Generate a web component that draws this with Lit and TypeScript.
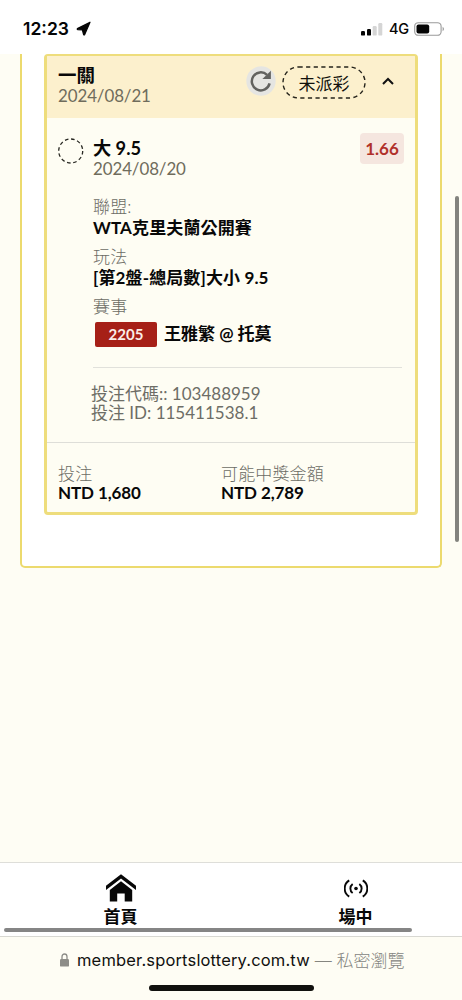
import { LitElement, html, css, svg } from 'lit';
import { customElement, property } from 'lit/decorators.js';

@customElement('status-bar')
class StatusBar extends LitElement {
  static styles = css`
    :host { display: flex; box-sizing: border-box; height: 54px; background: #fff; padding: 3px 17px 0 23px; align-items: center; font-family: Inter, sans-serif; color: #050505; }
    .time { font-size: 17.5px; font-weight: 600; letter-spacing: 0; width: 49px; white-space: nowrap; }
    .arrow { margin-left: 4px; width: 15px; height: 15px; display: block; }
    .right { margin-left: auto; display: flex; align-items: center; }
    .net { font-size: 14.5px; font-weight: 500; margin: 0 5px 0 6px; width: 20px; white-space: nowrap; letter-spacing: -0.2px; }
    svg { display: block; }
  `;
  render() {
    return html`
      <span class="time">12:23</span>
      <svg class="arrow" viewBox="0 0 15 15"><path d="M14 1.2 L1.4 7.6 Q.9 8.4 1.8 8.6 L6.4 9 L7.6 13.6 Q8.2 14.4 8.7 13.6 Z" fill="#050505" stroke="#050505" stroke-width="1.2" stroke-linejoin="round"/></svg>
      <div class="right">
        <svg width="22" height="14" viewBox="0 0 22 14">
          <rect x="0" y="9" width="4" height="4.6" rx="1.2" fill="#050505"/>
          <rect x="6" y="7" width="4" height="6.6" rx="1.2" fill="#050505"/>
          <rect x="11.7" y="4" width="4" height="9.6" rx="1.2" fill="#d5d5d5"/>
          <rect x="17.3" y="1" width="4" height="12.6" rx="1.2" fill="#d5d5d5"/>
        </svg>
        <span class="net">4G</span>
        <svg width="31" height="14" viewBox="0 0 31 14">
          <rect x=".7" y=".7" width="26.4" height="12.6" rx="3.6" fill="none" stroke="#9a9a9a" stroke-width="1.1"/>
          <rect x="2.5" y="2.5" width="12.7" height="9" rx="2" fill="#050505"/>
          <path d="M28.6 4.8 Q30 5.6 30 7 T28.6 9.2Z" fill="#9a9a9a"/>
        </svg>
      </div>`;
  }
}

@customElement('bet-field')
class BetField extends LitElement {
  @property() label = '';
  @property() value = '';
  static styles = css`
    :host { display: block; white-space: nowrap; }
    .label { height: var(--label-height, 20px); line-height: 18px; color: #6c6c65; font-weight: 300; letter-spacing: 0.15px; }
    .value { height: 20px; line-height: 20px; color: #080808; font-weight: 700; letter-spacing: var(--value-spacing, 0); }
  `;
  render() {
    return html`<div class="label">${this.label}</div>
      <div class="value"><slot>${this.value}</slot></div>`;
  }
}

@customElement('bet-card')
class BetCard extends LitElement {
  static styles = css`
    :host { display: flex; flex-direction: column; box-sizing: border-box; height: 461px; border: 3px solid #eedd7c; border-top-width: 2px; border-radius: 4px; background: #fefdf3; white-space: nowrap; overflow: hidden; }
    .head { box-sizing: border-box; height: 62px; flex: none; display: flex; background: #fcf0cd; padding: 9px 20px 0 11px; }
    .title { font-weight: 700; color: #080808; line-height: 21px; height: 21px; font-size: 18.5px; }
    .date { color: #6f6c5c; line-height: 20px; height: 21px; font-weight: 400; font-size: 16.9px; letter-spacing: -0.08px; }
    .tools { margin-left: auto; display: flex; height: 34px; align-items: center; }
    .refresh { display: block; margin: -3px 6px 0 0; }
    .state { position: relative; display: flex; align-items: center; justify-content: center; width: 84px; height: 33px; color: #11100c; font-weight: 400; }
    .outline { position: absolute; inset: 0; }
    .chev { margin: -2px 0 0 15px; display: block; }
    .pick { display: flex; padding: 20px 11px 0 11px; height: 42px; flex: none; }
    .ring { display: block; margin: 0 9px 0 0; }
    .pickname { font-weight: 700; font-size: 18.2px; line-height: 21px; height: 21px; color: #080808; }
    .odds { margin-left: auto; width: 44px; height: 31px; border-radius: 4px; background: #f5e6df; color: #b0302a; font-weight: 700; font-size: 17px; display: flex; align-items: center; justify-content: center; margin-top: -5px; }
    .fields { --value-spacing: 0.12px; margin: 18px 13px 0 46px; flex: none; height: 169px; border-bottom: 1px solid #e1e1db; display: flex; flex-direction: column; gap: 10px; }
    .match { display: flex; align-items: center; margin: 3px 0 0 2px; height: 26px; letter-spacing: 0; }
    .code { width: 62px; height: 25px; border-radius: 2px; background: #a62017; color: #fbeee8; font-size: 15px; display: flex; align-items: center; justify-content: center; margin-right: 7px; }
    .ids { padding: 16px 0 0 44px; height: 58px; flex: none; color: #6d6d66; line-height: 19px; border-bottom: 1px solid #deded8; }
    .money { --label-height: 18px; --value-spacing: -0.1px; display: grid; grid-template-columns: 163px 1fr; padding: 22px 0 0 11px; }
  `;
  render() {
    return html`
      <div class="head">
        <div><div class="title">一關</div><div class="date">2024/08/21</div></div>
        <div class="tools">
          <svg class="refresh" width="30" height="30" viewBox="0 0 30 30">
            <circle cx="15" cy="15" r="14.7" fill="#e5e5e2"/>
            <path d="M23.6 17.4 A9 9 0 1 1 21 8.8" fill="none" stroke="#62625f" stroke-width="2.5"/>
            <path d="M24.9 4.8 V13 H16.4 Z" fill="#62625f"/>
          </svg>
          <div class="state">
            <svg class="outline" width="84" height="33"><rect x="1" y="1" width="82" height="31" rx="15.5" fill="none" stroke="#25231b" stroke-width="1.4" stroke-dasharray="4.2 3.4"/></svg>
            未派彩
          </div>
          <svg class="chev" width="14" height="10" viewBox="0 0 14 10"><path d="M2 8 L7 3 L12 8" fill="none" stroke="#111" stroke-width="2"/></svg>
        </div>
      </div>
      <div class="pick">
        <svg class="ring" width="26" height="26" viewBox="0 0 26 26"><circle cx="12.7" cy="13" r="12" fill="none" stroke="#292923" stroke-width="1.3" stroke-dasharray="3.6 2.683"/></svg>
        <div><div class="pickname">大 9.5</div><div class="date">2024/08/20</div></div>
        <div class="odds">1.66</div>
      </div>
      <div class="fields">
        <bet-field label="聯盟:" value="WTA克里夫蘭公開賽"></bet-field>
        <bet-field label="玩法" value="[第2盤-總局數]大小 9.5"></bet-field>
        <bet-field label="賽事"><div class="match"><span class="code">2205</span>王雅繁 @ 托莫</div></bet-field>
      </div>
      <div class="ids"><div>投注代碼:: 103488959</div><div>投注 ID: 115411538.1</div></div>
      <div class="money">
        <bet-field label="投注" value="NTD 1,680"></bet-field>
        <bet-field label="可能中獎金額" value="NTD 2,789"></bet-field>
      </div>`;
  }
}

@customElement('tab-bar')
class TabBar extends LitElement {
  static styles = css`
    :host { position: relative; display: grid; grid-template-columns: 241px 1fr; box-sizing: border-box; height: 75px; background: #fff; border-top: 1px solid #deded9; border-bottom: 1px solid #d8d8d2; }
    .tab { display: flex; flex-direction: column; align-items: center; color: #080808; font-weight: 600; line-height: 20px; }
    .live { margin-left: 8px; }
    .icon { display: flex; align-items: center; justify-content: center; height: 28px; margin: 11px 0 5px; }
    .scroll { position: absolute; left: 4px; bottom: 4px; width: 408px; height: 4px; border-radius: 2px; background: #858585; }
  `;
  render() {
    const waves = svg`<path d="M4.5 1 A10.6 10.6 0 0 0 4.5 19 M8.3 4.9 A6.4 6.4 0 0 0 8.3 15.1 M15.7 4.9 A6.4 6.4 0 0 1 15.7 15.1 M19.5 1 A10.6 10.6 0 0 1 19.5 19" fill="none" stroke="#080808" stroke-width="2.1"/><circle cx="12" cy="10" r="2" fill="#080808"/>`;
    return html`
      <div class="tab"><div class="icon"><svg width="30" height="28" viewBox="0 0 30 28">
        <path d="M15 .2 L30 11.8 V16 L15 4.4 L0 16 V11.8 Z" fill="#080808"/>
        <path d="M15 7.2 L26.2 16 V27.6 H18.7 V19.4 H11.2 V27.6 H3.8 V16 Z" fill="#080808"/></svg></div>首頁</div>
      <div class="tab live"><div class="icon"><svg width="24" height="19" viewBox="-0.5 -0.5 25 21">${waves}</svg></div>場中</div>
      <div class="scroll"></div>`;
  }
}

@customElement('address-bar')
class AddressBar extends LitElement {
  static styles = css`
    :host { display: flex; flex-direction: column; align-items: center; box-sizing: border-box; height: 63px; background: #fefdf4; }
    .url { display: flex; align-items: center; align-self: stretch; height: 24px; margin: 11px 0 0 60px; font-family: Inter, "Noto Sans CJK TC", sans-serif; font-size: 16.5px; letter-spacing: 0.16px; color: #11110f; white-space: nowrap; }
    .lock { display: block; margin-right: 8px; }
    .mode { color: #85857f; font-weight: 300; font-size: 17px; letter-spacing: 0; margin: -2px 0 0 5px; }
    .home { width: 165px; height: 6px; border-radius: 3px; background: #11110e; margin-top: 13px; }
  `;
  render() {
    return html`<div class="url">
        <svg class="lock" width="9" height="14" viewBox="0 0 9 14"><rect x="0" y="6" width="9" height="7.6" rx="1.2" fill="#8d8d88"/><path d="M2 6.5 V3.7 A2.5 2.7 0 0 1 7 3.7 V6.5" fill="none" stroke="#8d8d88" stroke-width="1.3"/></svg>
        <span>member.sportslottery.com.tw</span><span class="mode">— 私密瀏覽</span>
      </div><div class="home"></div>`;
  }
}

@customElement('app-root')
class AppRoot extends LitElement {
  static styles = css`
    :host { display: flex; flex-direction: column; width: 462px; height: 1000px; overflow: hidden; background: #fefdf4; font-family: Lato, "Noto Sans CJK TC", sans-serif; font-size: 17px; }
    .page { position: relative; flex: 1; overflow: hidden; padding: 0 20px; }
    .panel { box-sizing: border-box; height: 514px; border: 2px solid #ecda6e; border-radius: 0 0 5px 5px; border-top: 0; background: #fff; padding: 0 22px; }
    .thumb { position: absolute; right: 3px; top: 142px; width: 4px; height: 346px; border-radius: 2px; background: #83837e; }
  `;
  render() {
    return html`
      <status-bar></status-bar>
      <div class="page">
        <div class="panel"><bet-card></bet-card></div>
        <div class="thumb"></div>
      </div>
      <tab-bar></tab-bar>
      <address-bar></address-bar>`;
  }
}
